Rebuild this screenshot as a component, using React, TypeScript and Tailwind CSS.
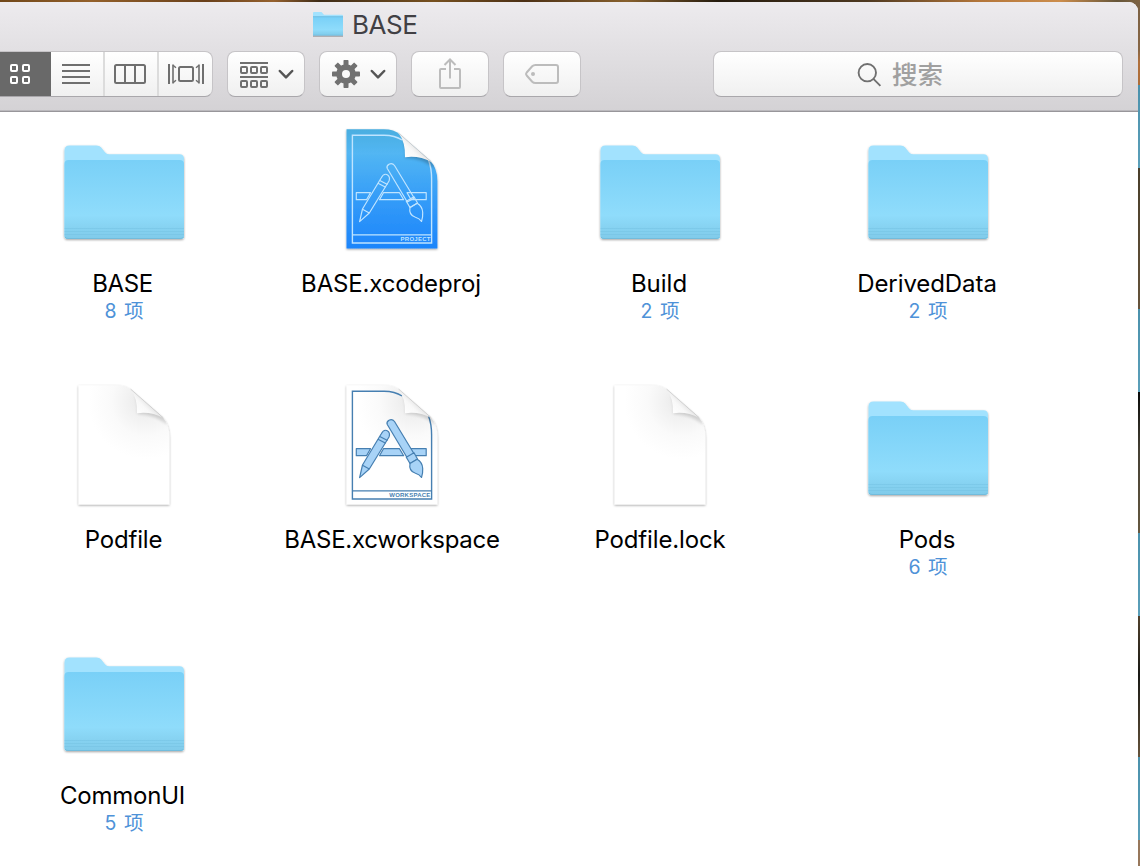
import React from "react";

type Kind = "folder" | "project" | "workspace" | "document";

interface Item {
  name: string;
  kind: Kind;
  count?: number;
  tracking: string;
}

const items: Item[] = [
  { name: "BASE", kind: "folder", count: 8, tracking: "tracking-[-0.4px] mr-[3px]" },
  { name: "BASE.xcodeproj", kind: "project", tracking: "tracking-[-0.15px] mr-[2px]" },
  { name: "Build", kind: "folder", count: 2, tracking: "tracking-[0px] mr-[2px]" },
  { name: "DerivedData", kind: "folder", count: 2, tracking: "tracking-[-0.08px] mr-[2px]" },
  { name: "Podfile", kind: "document", tracking: "tracking-[-0.15px] mr-[1px]" },
  { name: "BASE.xcworkspace", kind: "workspace", tracking: "tracking-[-0.28px]" },
  { name: "Podfile.lock", kind: "document", tracking: "tracking-[-0.15px]" },
  { name: "Pods", kind: "folder", count: 6, tracking: "tracking-[-0.15px] mr-[2px]" },
  { name: "CommonUI", kind: "folder", count: 5, tracking: "tracking-[-0.2px] mr-[3px]" },
];

function Defs() {
  return (
    <svg width="0" height="0" className="absolute">
      <defs>
        <linearGradient id="front" x1="0" y1="0" x2="0" y2="1">
          <stop offset="0" stopColor="#79d0f7" />
          <stop offset="0.7" stopColor="#8fdcfb" />
          <stop offset="0.86" stopColor="#86d2f1" />
          <stop offset="1" stopColor="#80cbea" />
        </linearGradient>
        <linearGradient id="blue" x1="0" y1="0" x2="0" y2="1">
          <stop offset="0" stopColor="#4aaee0" />
          <stop offset="0.2" stopColor="#52b6f3" />
          <stop offset="0.6" stopColor="#339bf8" />
          <stop offset="1" stopColor="#1d85fb" />
        </linearGradient>
        <radialGradient id="paper" gradientUnits="userSpaceOnUse" cx="86" cy="20" r="58">
          <stop offset="0" stopColor="#e6e6e6" />
          <stop offset="0.3" stopColor="#f1f1f1" />
          <stop offset="0.6" stopColor="#fafafa" />
          <stop offset="1" stopColor="#ffffff" />
        </radialGradient>
        <linearGradient id="curl" gradientUnits="userSpaceOnUse" x1="77" y1="33" x2="89" y2="21">
          <stop offset="0" stopColor="#ffffff" />
          <stop offset="0.6" stopColor="#f8f8f8" />
          <stop offset="1" stopColor="#e2e2e2" />
        </linearGradient>
        <filter id="shadow" x="-10%" y="-10%" width="120%" height="120%">
          <feDropShadow dx="0" dy="1" stdDeviation="1" floodColor="#000" floodOpacity="0.36" />
        </filter>
        <filter id="soft" x="-50%" y="-50%" width="200%" height="200%">
          <feGaussianBlur stdDeviation="1.5" />
        </filter>
        <clipPath id="page">
          <path d={OUTLINE} />
        </clipPath>
      </defs>
    </svg>
  );
}

function Folder() {
  return (
    <svg viewBox="0 0 128 128" className="h-32 w-32">
      <g filter="url(#shadow)">
        <path d="M4.500 25.500Q4.500 20.500 9.500 20.500H36.500Q39.500 20.500 41 22.300L45 27.200Q46.500 29.200 49 29.200H119.500Q124 29.200 124 33.700V111Q124 114 120.500 114H8Q4.500 114 4.500 111Z" fill="#a2e2fe" />
        <path d="M4.500 39Q4.500 35 8.500 35H119.500Q124 35 124 39V111Q124 114 120.500 114H8Q4.500 114 4.500 111Z" fill="url(#front)" />
      </g>
      <path d="M4.500 103.500H124M4.500 106.500H124M4.500 109.500H124" stroke="#71bee0" strokeWidth="0.700" opacity="0.600" />
      <path d="M5 112Q5.500 113.500 8 113.500H120Q123 113.500 123.500 112" stroke="#6eb8d8" strokeWidth="0.800" fill="none" />
    </svg>
  );
}

const OUTLINE =
  "M18.500 4.300H56Q66 4.300 72 9.500L102 35.500Q109.400 43 109.400 56V123.600H18.500Z";

function Tools({ stroke, fill }: { stroke: string; fill: string }) {
  return (
    <g stroke={stroke} strokeWidth="1.200" fill={fill} strokeLinejoin="round">
      <path d="M28.300 67.700H42.500L38.500 74.700H28.300ZM55.500 67.700H71.500L75.700 74.700H51.500ZM79 67.700H98.200V74.700H83.200Z" />
      <path d="M53.300 52.700L34.500 84L31.600 96.600L41.300 88L61 56Q62.700 51.500 58.800 49.500Q55.500 48.300 53.300 52.700Z" />
      <path d="M51.800 55.500L59.500 59.500M50 58.300L57.700 62.300M34.500 84.200L41.300 88" fill="none" />
      <path d="M59.300 43.500L79.300 77L86.200 73L66.500 40.500Q64.300 37.600 61 39.200Q58.100 41 59.300 43.500Z" />
      <path d="M78.300 76.200L86 71.800L89.500 78L82 82.500Z" />
      <path d="M82 82.500L89.200 78.300Q94.500 81.500 94.700 87.500Q95 92 93.500 96.500Q91.500 93.500 87.500 92.300Q80.500 90 82 82.500Z" />
    </g>
  );
}

function Doc({ kind }: { kind: "project" | "workspace" | "document" }) {
  const project = kind === "project";
  const line = project ? "#bfe4ff" : "#467fb1";
  return (
    <svg viewBox="0 0 128 128" className="h-32 w-32">
      <path d={OUTLINE} fill={project ? "url(#blue)" : "url(#paper)"} filter="url(#shadow)" />
      {kind !== "document" && (
        <g>
          <path d="M74 15Q67 10.200 56 10.200H24.400V118H103.600V54Q103.600 43 100.500 35" fill="none" stroke={line} strokeWidth="1.400" />
          <path d="M24.400 109.900H103.600" stroke={line} strokeWidth="1.400" />
          <Tools stroke={line} fill={project ? "none" : "#a8d3f7"} />
          <text
            x={project ? 72.500 : 61.300}
            y="116.200"
            textLength={project ? 30 : 41}
            fontSize="6"
            fontWeight="700"
            fill={line}
            fontFamily="Liberation Sans, sans-serif"
          >
            {project ? "PROJECT" : "WORKSPACE"}
          </text>
        </g>
      )}
      <g clipPath="url(#page)">
        <path d="M75 14Q78 22 77.500 33Q92 32 108 44L104 34Z" fill="#000" opacity={project ? 0.22 : 0.14} filter="url(#soft)" />
      </g>
      <path d="M70.500 8Q77.500 17 77 32.300Q91 30.300 103.500 37Z" fill="url(#curl)" />
      <path d="M70.500 8L103.500 37" stroke="#cccccc" strokeWidth="0.800" />
    </svg>
  );
}

function FileCell({ item }: { item: Item }) {
  return (
    <div className="flex flex-col items-center pt-[13px]">
      {item.kind === "folder" ? <Folder /> : <Doc kind={item.kind} />}
      <div className={"mt-[17px] whitespace-nowrap text-[24px] leading-7 text-black " + item.tracking}>{item.name}</div>
      {item.count !== undefined && (
        <div className="text-[19.500px] leading-[26px] [word-spacing:2px] text-[#4e92d8]">{item.count} 项</div>
      )}
    </div>
  );
}

const BUTTON =
  "flex h-[46px] w-[78px] items-center justify-center rounded-[8px] border border-[#c6c4c7] border-b-[#a9a7ab] bg-linear-to-b from-white to-[#f0f0f0]";

function Chevron() {
  return (
    <svg width="16" height="11" viewBox="0 0 16 11" fill="none" stroke="#555" strokeWidth="2.500" strokeLinecap="round" strokeLinejoin="round">
      <path d="M1.800 2L8 8.400L14.200 2" />
    </svg>
  );
}

function Gear() {
  return (
    <svg width="28" height="28" viewBox="-14 -14 28 28">
      {[0, 45, 90, 135].map((a) => (
        <rect key={a} x="-2.500" y="-14" width="5" height="28" rx="0.800" fill="#717171" transform={`rotate(${a})`} />
      ))}
      <circle r="9.800" fill="#717171" />
      <circle r="4" fill="#f9f9f9" />
    </svg>
  );
}

function Toolbar() {
  return (
    <div className="flex h-[46px]">
      <div className="flex w-[213px] overflow-hidden rounded-r-[8px] border-y border-r border-[#c6c4c7] border-b-[#a9a7ab] bg-linear-to-b from-white to-[#f0f0f0]">
        <div className="-my-px flex w-[51px] items-center bg-[#696969] pl-[10px]">
          <svg width="20" height="20" viewBox="0 0 20 20" fill="none" stroke="#fff" strokeWidth="2">
            <rect x="1" y="1" width="6" height="6" rx="1" />
            <rect x="13" y="1" width="6" height="6" rx="1" />
            <rect x="1" y="13" width="6" height="6" rx="1" />
            <rect x="13" y="13" width="6" height="6" rx="1" />
          </svg>
        </div>
        <div className="flex w-[54px] items-center border-r-2 border-[#dcdcdc] pl-[11px]">
          <svg width="28" height="20" viewBox="0 0 28 20" stroke="#6f6f6f" strokeWidth="2">
            <path d="M0 1H28M0 7H28M0 13H28M0 19H28" />
          </svg>
        </div>
        <div className="flex w-[54px] items-center border-r-2 border-[#dcdcdc] pl-[9px]">
          <svg width="32" height="20" viewBox="0 0 32 20" fill="none" stroke="#6f6f6f" strokeWidth="2">
            <rect x="1" y="1" width="30" height="18" rx="1.500" />
            <path d="M11 1V19M21 1V19" />
          </svg>
        </div>
        <div className="flex items-center pl-[9px]">
          <svg width="36" height="20" viewBox="0 0 36 20" fill="none" stroke="#6f6f6f" strokeWidth="2">
            <path d="M1 0V20M35 0V20" />
            <rect x="11" y="3" width="14" height="14" rx="1.500" />
            <path d="M5 0.500V19.500M31 0.500V19.500" strokeWidth="1.600" />
            <path d="M5 1.200L8 3.800M5 18.800L8 16.200M31 1.200L28 3.800M31 18.800L28 16.200" strokeWidth="1.500" />
          </svg>
        </div>
      </div>
      <div className={BUTTON + " ml-[14px] gap-[10px] pl-[2px]"}>
        <svg width="28" height="28" viewBox="0 0 28 28" className="mt-[2px]" fill="none" stroke="#6f6f6f" strokeWidth="2">
          <path d="M0 2H28M0 16H28" />
          <rect x="1" y="6" width="6" height="6" rx="1" />
          <rect x="11" y="6" width="6" height="6" rx="1" />
          <rect x="21" y="6" width="6" height="6" rx="1" />
          <rect x="1" y="20" width="6" height="6" rx="1" />
          <rect x="11" y="20" width="6" height="6" rx="1" />
          <rect x="21" y="20" width="6" height="6" rx="1" />
        </svg>
        <Chevron />
      </div>
      <div className={BUTTON + " ml-[14px] gap-[10px] pl-[2px]"}>
        <Gear />
        <Chevron />
      </div>
      <div className={BUTTON + " ml-[14px]"}>
        <svg width="22" height="32" viewBox="0 0 22 32" className="mb-[3px]" fill="none" stroke="#bcbcbc" strokeWidth="2">
          <path d="M7 12H2Q1 12 1 13V30Q1 31 2 31H20Q21 31 21 30V13Q21 12 20 12H15" />
          <path d="M11 21.500V3M5.500 8L11 2.500L16.500 8" />
        </svg>
      </div>
      <div className={BUTTON + " ml-[14px]"}>
        <svg width="34" height="20" viewBox="0 0 34 20" fill="none" stroke="#bcbcbc" strokeWidth="2">
          <path d="M10.500 1H31Q33 1 33 3V17Q33 19 31 19H10.500Q8.500 19 7.200 17.700L1.700 11.500Q0.500 10 1.700 8.500L7.200 2.300Q8.500 1 10.500 1Z" />
          <circle cx="8" cy="10" r="2" fill="#bcbcbc" stroke="none" />
        </svg>
      </div>
      <div className="ml-[132px] flex w-[410px] items-center rounded-[8px] border border-[#c6c4c7] border-b-[#a9a7ab] bg-linear-to-b from-white to-[#f0f0f0] pl-[143px]">
        <svg width="25" height="25" viewBox="0 0 25 25" className="mt-[2px]" fill="none" stroke="#707070" strokeWidth="1.900">
          <circle cx="10.300" cy="9.700" r="8.700" />
          <path d="M16.400 15.900L23.400 22.900" />
        </svg>
        <span className="mt-[2px] ml-[10px] text-[25.500px] leading-9 font-medium text-[#a0a0a0]">搜索</span>
      </div>
    </div>
  );
}

export default function App() {
  return (
    <div className="h-[866px] w-[1140px] overflow-hidden bg-[linear-gradient(to_bottom,#7a6144_0px,#876645_50px,#b0703c_62px,#ae6d38_85px,#4a91ac_85px,#5b9fb9_168px,#493e2a_168px,#65533b_309px,#4a91ac_309px,#5b9fb9_392px,#090a09_392px,#454034_450px,#655840_533px,#4a91ac_533px,#5b9fb9_616px,#51412c_616px,#191915_675px,#65533b_757px,#4a91ac_757px,#5b9fb9_840px,#97775b_840px)] font-['Inter','Noto_Sans_CJK_SC',sans-serif]">
      <Defs />
      <div className="h-[2px] bg-[linear-gradient(to_right,#704719,#93602a_8%,#69401a_18%,#95612e_24%,#3e2b17_28%,#76501f_38%,#4c3015_46%,#87602d_55%,#251b0e_63%,#4d3820_76%,#b4763a_86%,#cc8d4c_93%,#66563a_98%,#806442)]" />
      <div className="flex h-[864px] w-[1138px] flex-col overflow-hidden rounded-tr-[9px] bg-white">
        <header className="h-[110px] shrink-0 border-b border-[#98969a] bg-linear-to-b from-[#edebee] to-[#d4d2d5] shadow-[inset_0_-1px_0_#bbb9bd]">
          <div className="flex h-[49px] pt-[9px] pl-[313px]">
            <svg width="31" height="27" viewBox="0 0 31 27">
              <path d="M0 2Q0 1 1 1H8.500L11 3.700H29Q30 3.700 30 4.700V24.300H0Z" fill="#a2e2fe" />
              <path d="M0 6H30V24.300H0Z" fill="url(#front)" />
              <path d="M0 5.700H30M0 24.300H30" stroke="#62b4db" strokeWidth="0.800" />
              <path d="M0 25.300H30" stroke="#a3a2a5" />
            </svg>
            <h1 className="ml-[8px] text-[26px] leading-7 tracking-[-0.500px] text-[#414044]">BASE</h1>
          </div>
          <Toolbar />
        </header>
        <main className="-ml-[10px] grid auto-rows-[256px] grid-cols-[repeat(4,268px)]">
          {items.map((item) => (
            <FileCell key={item.name} item={item} />
          ))}
        </main>
      </div>
    </div>
  );
}
